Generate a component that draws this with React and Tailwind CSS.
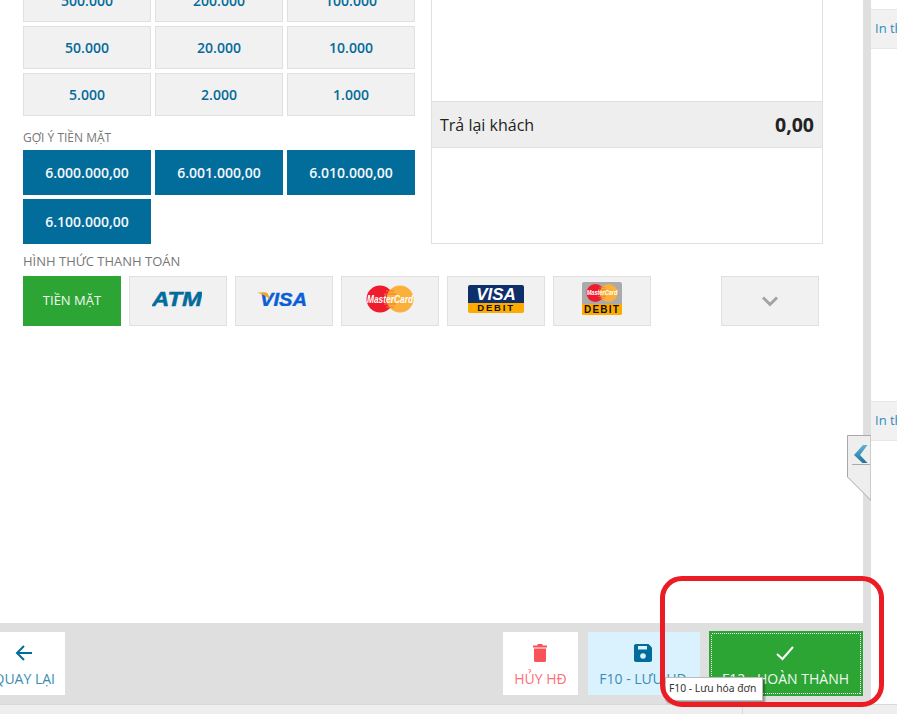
const bills = ["500.000", "200.000", "100.000", "50.000", "20.000", "10.000", "5.000", "2.000", "1.000"];
const suggestions = ["6.000.000,00", "6.001.000,00", "6.010.000,00", "6.100.000,00"];

function MasterCardLogo({ width, height }) {
  return (
    <svg width={width} height={height} viewBox="0 0 48 28">
      <circle cx="14" cy="14" r="13.5" fill="#ee1c2e" />
      <circle cx="34" cy="14" r="13.5" fill="#fbb03b" />
      <path d="M20 6H28M18 9H30M18 19H30M20 22H28" stroke="#f47a2a" strokeWidth="1.2" />
      <text x="1" y="17.5" fontFamily="Liberation Sans, sans-serif" fontSize="10.5" fontWeight="700" fontStyle="italic" fill="#fff" textLength="46" lengthAdjust="spacingAndGlyphs">
        MasterCard
      </text>
    </svg>
  );
}

function AtmLogo() {
  return (
    <svg className="mr-[2px]" width="50" height="16" viewBox="0 0 50 16">
      <text x="0" y="15" fontFamily="Liberation Sans, sans-serif" fontSize="20.5" fontWeight="700" fontStyle="italic" fill="#026c9b" stroke="#026c9b" strokeWidth="0.5" textLength="50" lengthAdjust="spacingAndGlyphs">
        ATM
      </text>
    </svg>
  );
}

function VisaLogo() {
  return (
    <svg className="mr-[4px]" width="50" height="14" viewBox="0 0 50 14">
      <text x="3" y="13.5" fontFamily="Liberation Sans, sans-serif" fontSize="18" fontWeight="700" fontStyle="italic" fill="#0b5fd6" stroke="#0b5fd6" strokeWidth="0.4" textLength="47" lengthAdjust="spacingAndGlyphs">
        VISA
      </text>
      <path d="M0 0.5H8.5C10.5 0.5 11.8 2 12.5 7.5C9.5 4 5 1.8 0 0.5Z" fill="#f5a81c" />
    </svg>
  );
}

function VisaDebitLogo() {
  return (
    <div className="flex h-[28px] w-[56px] flex-col overflow-hidden rounded-[2px]">
      <div className="flex h-[18px] items-center justify-center bg-[#0f2f6b] pt-[1px] font-['Liberation_Sans',sans-serif] text-[17px] leading-none font-bold text-white italic">
        VISA
      </div>
      <div className="flex h-[10px] items-center justify-center bg-[#fdab00] font-['Liberation_Sans',sans-serif] text-[9.5px] leading-none font-bold tracking-[1.8px] text-[#111]">
        DEBIT
      </div>
    </div>
  );
}

function MaestroDebitLogo() {
  return (
    <div className="flex h-[33px] w-[40px] flex-col overflow-hidden rounded-[2px] bg-[#aaa]">
      <div className="flex h-[22px] items-center justify-center">
        <MasterCardLogo width={32} height={20} />
      </div>
      <div className="flex h-[11px] items-center justify-center bg-[#fdab00] font-['Liberation_Sans',sans-serif] text-[10px] leading-none font-bold tracking-[1.2px] text-[#111]">
        DEBIT
      </div>
    </div>
  );
}

function PayCard({ children, className = "" }) {
  return (
    <div className={`flex h-[50px] w-[98px] items-center justify-center border border-[#e0e0e0] bg-[#f1f1f1] ${className}`}>
      {children}
    </div>
  );
}

function ActionButton({ icon, label, className }) {
  return (
    <div className={`flex flex-col items-center text-[14px] leading-[20px] ${className}`}>
      <div className="flex h-[22px] items-center justify-center">{icon}</div>
      <span className="mt-[5px] whitespace-nowrap">{label}</span>
    </div>
  );
}

function ArrowIcon() {
  return (
    <svg width="22" height="22" viewBox="0 0 22 22" fill="none" stroke="#026c9b" strokeWidth="2">
      <path d="M19 11H4M11 4L4 11L11 18" />
    </svg>
  );
}

function TrashIcon() {
  return (
    <svg width="14" height="18" viewBox="0 0 14 18" fill="#fb5258">
      <path d="M4.5 0H9.5V1.5H14V3.5H0V1.5H4.5Z" />
      <path d="M1 4.5H13V16.5C13 17.4 12.4 18 11.5 18H2.5C1.6 18 1 17.4 1 16.5Z" />
    </svg>
  );
}

function SaveIcon() {
  return (
    <svg width="18" height="18" viewBox="0 0 18 18">
      <path d="M2 0H14.5L18 3.5V16C18 17.2 17.2 18 16 18H2C0.8 18 0 17.2 0 16V2C0 0.8 0.8 0 2 0Z" fill="#026c9b" />
      <rect x="4" y="2" width="9" height="3.5" fill="#daf2fd" />
      <circle cx="9" cy="12" r="2.8" fill="#daf2fd" />
    </svg>
  );
}

function CheckIcon() {
  return (
    <svg width="22" height="22" viewBox="0 0 22 22" fill="none" stroke="#fff" strokeWidth="2">
      <path d="M3 12L8.5 17L19 5" />
    </svg>
  );
}

function SideTab({ className = "" }) {
  return (
    <div className={`flex h-[40px] items-center overflow-hidden border-y border-[#e6e6e6] bg-[#f1f1f1] pl-[4px] text-[13px] whitespace-nowrap text-[#2b8fc0] ${className}`}>
      In thông tin
    </div>
  );
}

export default function App() {
  return (
    <div className="relative flex h-[714px] w-[897px] flex-col overflow-hidden bg-white font-['Open_Sans',sans-serif]">
      <div className="flex min-h-0 flex-1">
        <div className="flex w-[863px] flex-col">
          <div className="flex-1 overflow-hidden">
            <div className="-mt-[21px] flex pl-[23px]">
              <div className="w-[392px]">
                <div className="grid grid-cols-3 gap-[4px]">
                  {bills.map((bill) => (
                    <div key={bill} className="flex h-[43px] items-center justify-center border border-[#e0e0e0] bg-[#f1f1f1] text-[14px] font-semibold text-[#056a9a]">
                      {bill}
                    </div>
                  ))}
                </div>
                <div className="mt-[14px] text-[12px] leading-[16px] text-[#777]">GỢI Ý TIỀN MẶT</div>
                <div className="mt-[4px] grid grid-cols-3 gap-[4px]">
                  {suggestions.map((amount) => (
                    <div key={amount} className="flex h-[45px] items-center justify-center bg-[#026c9b] text-[14px] font-semibold text-[#f4f8fa]">
                      {amount}
                    </div>
                  ))}
                </div>
              </div>
              <div className="ml-[16px] flex h-[265px] w-[392px] flex-col border-x border-b border-[#e0e0e0] pt-[122px]">
                <div className="flex h-[47px] items-center justify-between border-y border-[#e0e0e0] bg-[#eee] px-[8px] text-[#222]">
                  <span className="text-[16px]">Trả lại khách</span>
                  <span className="text-[19.5px] font-bold">0,00</span>
                </div>
              </div>
            </div>
            <div className="mt-[8px] pl-[23px] text-[13px] leading-[18px] text-[#777]">HÌNH THỨC THANH TOÁN</div>
            <div className="mt-[6px] flex w-[819px] gap-[8px] pl-[23px]">
              <div className="flex h-[50px] w-[98px] items-center justify-center bg-[#2ca535] text-[13px] text-[#f2faf2]">TIỀN MẶT</div>
              <PayCard className="pb-[5px]">
                <AtmLogo />
              </PayCard>
              <PayCard className="pb-[5px]">
                <VisaLogo />
              </PayCard>
              <PayCard className="pb-[5px]">
                <MasterCardLogo width={48} height={28} />
              </PayCard>
              <PayCard className="pb-[5px]">
                <VisaDebitLogo />
              </PayCard>
              <PayCard className="pb-[5px]">
                <MaestroDebitLogo />
              </PayCard>
              <PayCard className="ml-auto">
                <svg width="18" height="12" viewBox="0 0 18 12" fill="none" stroke="#a3a3a3" strokeWidth="3">
                  <path d="M2 2.5L9 9.5L16 2.5" />
                </svg>
              </PayCard>
            </div>
          </div>
          <div className="flex h-[81px] items-center bg-[#dfdfdf] py-[1px]">
            <div className="flex h-[63px] w-[65px] justify-end overflow-hidden bg-white pt-[10px] pr-[10px]">
              <ActionButton icon={<ArrowIcon />} label="QUAY LẠI" className="text-[#3a8db5]" />
            </div>
            <div className="ml-auto flex h-[63px] w-[75px] justify-center bg-white pt-[10px]">
              <ActionButton icon={<TrashIcon />} label="HỦY HĐ" className="text-[#fb6f76]" />
            </div>
            <div className="ml-[10px] flex h-[63px] w-[112px] justify-center bg-[#daf2fd] pt-[10px] pr-[2px]">
              <ActionButton icon={<SaveIcon />} label="F10 - LƯU HĐ" className="text-[#3a8db5]" />
            </div>
            <div className="relative ml-[9px] flex h-[65px] w-[154px] justify-center bg-[#2ca535] pt-[11px] pr-[1px]">
              {/* focus ring, crisp 1px on / 1px off */}
              <svg className="absolute top-0 left-0" width="154" height="65" viewBox="0 0 154 65" fill="none" stroke="#fff" strokeDasharray="1 1" shapeRendering="crispEdges">
                <rect x="2.5" y="2.5" width="149" height="60" />
              </svg>
              <ActionButton icon={<CheckIcon />} label="F12 - HOÀN THÀNH" className="text-[#f2faf2]" />
            </div>
          </div>
        </div>
        <div className="w-[8px] bg-[#dfdfdf]" />
        <div className="flex w-[26px] flex-col pt-[9px]">
          <SideTab />
          <SideTab className="mt-[352px]" />
        </div>
      </div>
      <div className="flex h-[10px] border-t border-[#d8d8d8] bg-[#eee]">
        <div className="w-[743px] border-r border-[#d8d8d8]" />
      </div>

      {/* collapse tab on the gutter */}
      <svg className="absolute top-[435px] left-[847px]" width="24" height="66" viewBox="0 0 24 66">
        <defs>
          <linearGradient id="tabArrow" x1="0" y1="0" x2="0" y2="1">
            <stop offset="0" stopColor="#5fb2d8" />
            <stop offset="1" stopColor="#1f7299" />
          </linearGradient>
        </defs>
        <path d="M24 0.5H0.5V42L24 65.5Z" fill="#eee" stroke="#a8a8a8" />
        <path d="M16 10H20.5L13 20L20.5 28H15.5L7 20Z" fill="url(#tabArrow)" />
        <rect x="5" y="29" width="18" height="1" fill="#aaa" />
      </svg>

      {/* tooltip */}
      <div className="absolute top-[677px] left-[665px] flex h-[24px] w-[98px] items-center border border-[#bbb] bg-white pl-[3px] font-['Noto_Sans',sans-serif] text-[10.3px] whitespace-nowrap text-[#333] shadow-[2px_2px_2px_rgba(0,0,0,0.35)]">
        F10 - Lưu hóa đơn
      </div>

      {/* red marker drawn over the screenshot */}
      <div className="pointer-events-none absolute top-[576px] left-[660px] h-[131px] w-[224px] rounded-[22px] border-[5px] border-[#ec1c24]" />
    </div>
  );
}
